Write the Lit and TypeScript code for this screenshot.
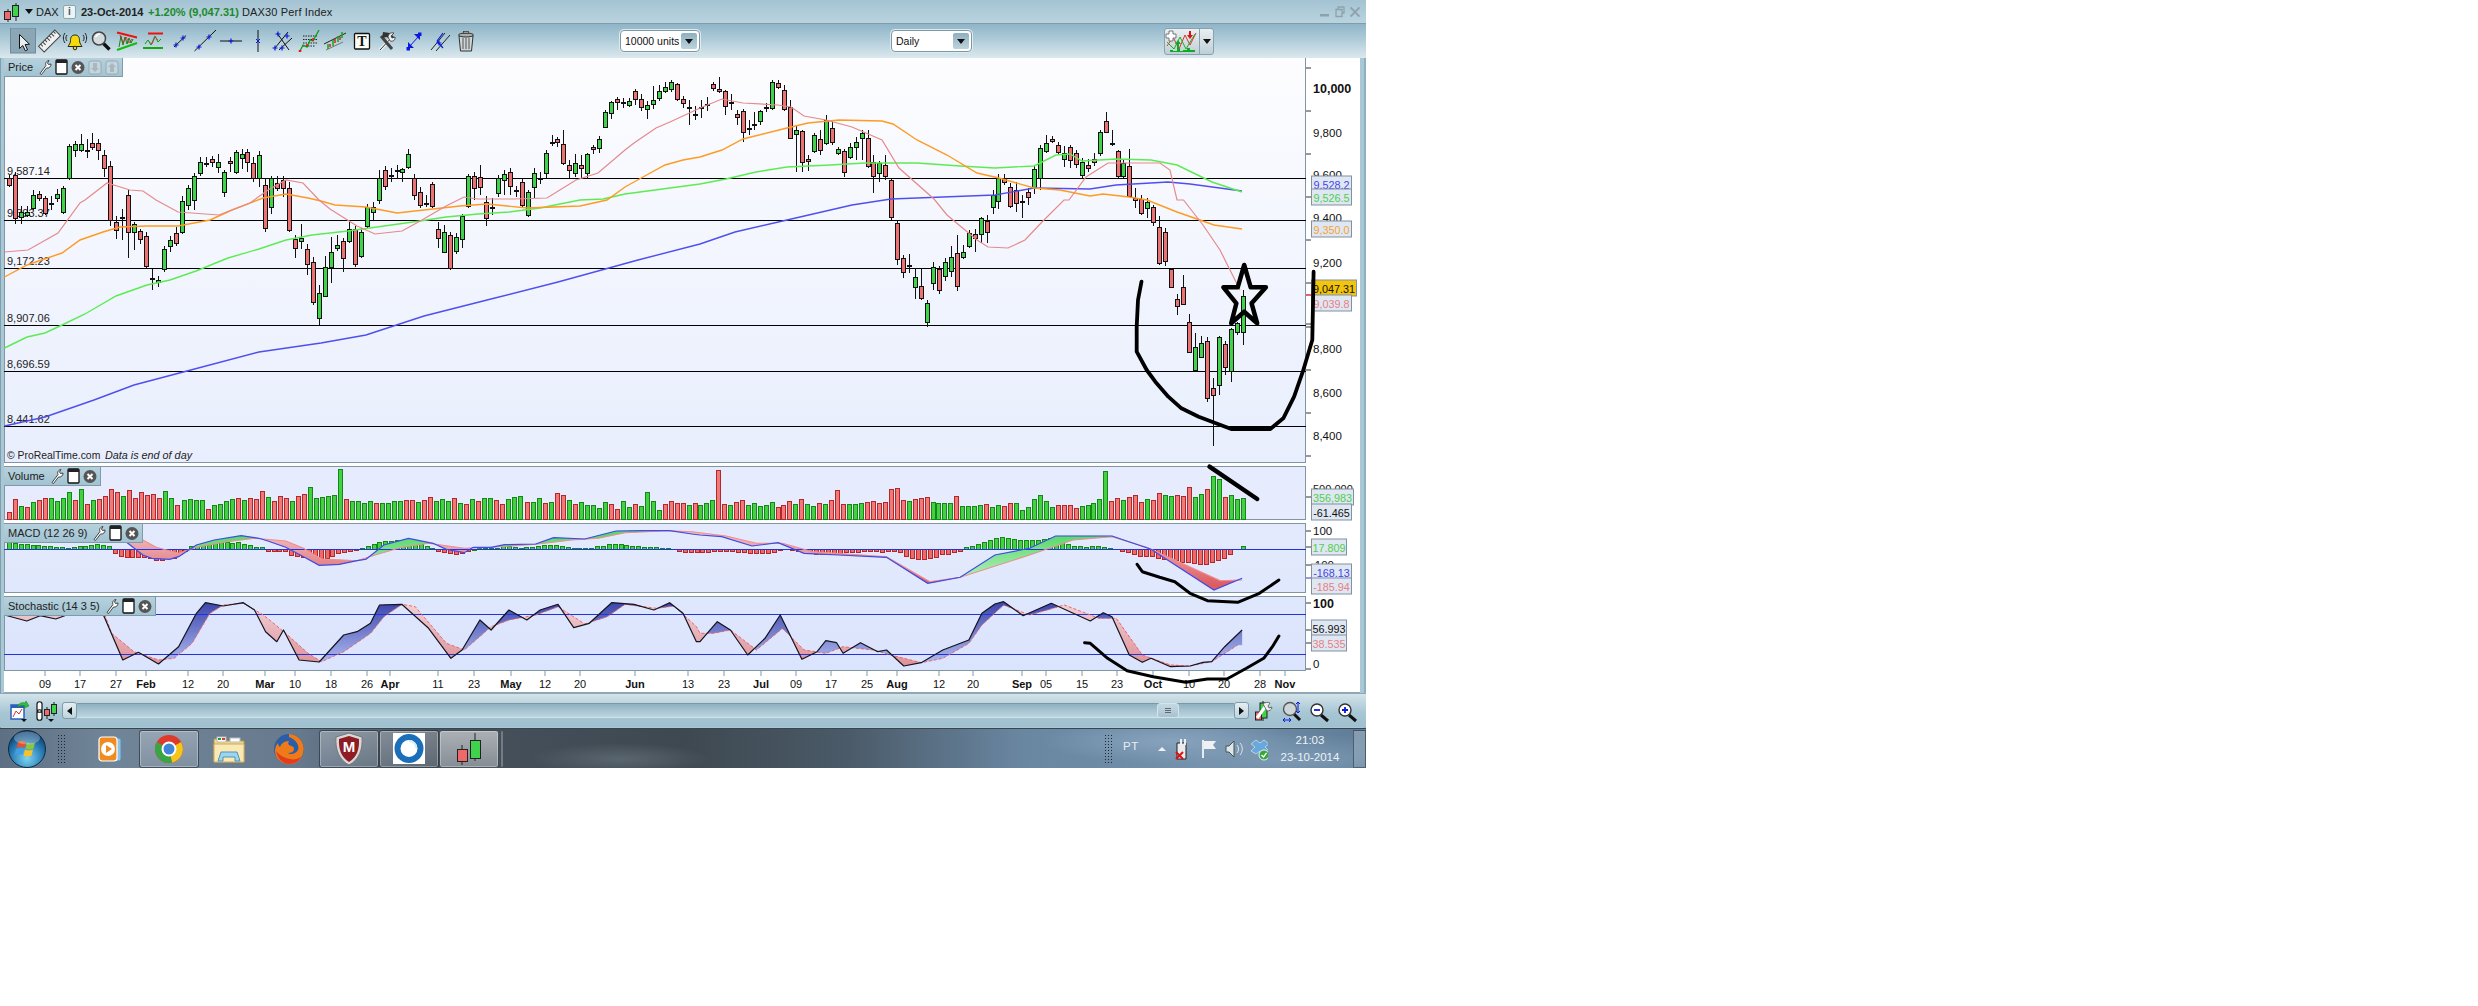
import { LitElement, html, svg, css } from "lit";
import { customElement } from "lit/decorators.js";

type Pt = [number, number];

const parse = (s: string): Pt[] => s.trim().split(/\s+/).map((p) => p.split(",").map(Number) as Pt);
const zl = (s: string, oy: number): Pt[] => parse(s).map(([x, y]) => [x / 2.24, y / 3 + oy] as Pt);
const zr = (s: string, oy: number): Pt[] => parse(s).map(([x, y]) => [700 + x / 2.306, y / 3 + oy] as Pt);
const line = (p: Pt[]) => p.map(([x, y]) => `${x.toFixed(1)},${y.toFixed(1)}`).join(" ");
const lerp = (p: Pt[], x: number) => {
  if (x <= p[0][0]) return p[0][1];
  for (let i = 1; i < p.length; i++) {
    if (x <= p[i][0]) {
      const t = (x - p[i - 1][0]) / (p[i][0] - p[i - 1][0] || 1);
      return p[i - 1][1] + t * (p[i][1] - p[i - 1][1]);
    }
  }
  return p[p.length - 1][1];
};
const hash = (i: number) => {
  const v = Math.sin(i * 12.9898 + 4.1) * 43758.5453;
  return v - Math.floor(v);
};

/* ---------- candles: c top,bot[:wickTop,wickBot] ---------- */
const LEFT = `r178,185 r175,218 g212,217 g212,215 g195,208 r194,198 r198,213 d203 g194,198 g188,212:186,214 g146,178:144,180
g144,150 g144,150:134,152 d150:139,158 r143,147:133,150 r143,150:139,160 r155,168:150,177 r166,220:161,226 r222,230:216,239 d217:209,240
r195,232:190,258 g224,232:222,250 r231,239:229,244 r236,266:232,268 d278:269,290 g280,282:276,287 g249,269:246,272 g240,246:236,252 r233,243:227,246
g201,232:196,234 g188,205:185,210 g176,200:173,210 g162,173:157,176 d163:157,167 r159,162:156,167 g162,167:154,173 g172,192:170,197 r161,163:157,172
g152,172:150,174 g154,158:149,169 r152,162:149,172 r163,178:157,182 g155,178:151,187 r185,228:178,232 g178,207:176,214 r183,188:176,191 r180,188:176,197
r188,230:182,232 r239,248:235,258 g238,241:224,249 r249,264:244,275 r262,302:257,305 g293,318:285,325 g267,296:256,297 g252,267:237,283 g245,248:235,251
r241,258:238,272 g229,241:222,243 r229,264:226,267 g232,256:228,258 g207,226:204,229 g207,212:202,220 g178,200:170,204 r170,186:166,190 d175:168,182 d170:165,179
g169,172:168,182 g154,167:149,169 r178,195:174,200 r192,205:187,208 d203:195,207 r184,206:182,208 r229,238:222,248 g232,252:225,253 r235,268:232,270 g237,251:233,254
g216,239:214,248 g176,206:174,208 r176,188:172,200 r177,187:165,195 r202,218:196,226 d207:198,215 g178,193:175,197 g174,180:170,195 r172,186:168,195 d190:186,197
r182,205:178,208 g192,215:190,217 g173,187:168,198 d178:172,184 g153,173:150,178 d142:135,146 r139,142:137,147 r144,163:130,165 r165,170:160,178 g163,173:154,177
r165,168:155,178 g154,173:153,179 r147,149:145,154 g139,148:136,153 g112,127:110,128 g102,113:101,119 r99,102:97,110 d102:98,108 g101,105:98,107 r91,99:89,105
r99,107:94,111 g105,109:101,119 g100,104:86,109 g91,98:85,101 g87,91:82,93 g82,89:80,92 r84,99:83,101 r99,103:96,108 d107:100,125 d114:106,120`;

const RIGHT = `d107:100,118 d104:97,111 r84,88:82,91 r89,91:77,93 r91,106:90,115 d102:94,110 r114,117:110,125 r111,132:109,142 d128:120,135 d124:112,130 g111,121:110,125 d107:103,112
g82,108:80,110 r83,87:80,89 r90,109:85,111 r107,138:100,139 g130,134:125,172 r131,162:130,172 r159,161:155,171 g135,151:133,153 r139,150:130,155 g120,143:115,145 r128,142:122,145
g149,153:147,155 r151,172:149,177 g147,157:143,159 g142,147:137,160 g133,138:130,160 r138,166:130,168 r162,176:155,193 g163,173:161,182 r165,176:155,180 r180,217:179,220 r223,259:220,265
r258,272:255,278 d265:254,273 g277,287:268,299 r286,298:268,300 g303,322:300,327 g267,283:262,290 r269,290:266,294 g262,276:258,281 g257,271:246,277 r253,286:235,291 g252,257:245,259
g233,246:230,248 r234,238:229,252 g218,234:217,243 r221,232:215,243 g195,207:190,214 g178,201:174,209 r178,182:174,185 r187,206:183,208 r190,203:182,212 d201:195,218 r192,197:188,205
g169,188:165,194 g148,178:145,190 g143,151:135,153 r139,141:136,143 r145,152:142,154 g153,159:146,167 r147,160:145,168 r153,164:150,168 g162,175:158,178 r165,168:159,172 r159,162:153,166
g132,153:130,156 r121,132:112,133 d143:130,146 r151,176:150,178 g163,176:160,178 r166,196:149,197 r198,200:188,208 r199,213:195,215 g202,208:198,218 r207,222:205,226 r227,263:216,265
r232,261:228,266 r269,287:268,288 r299,306:294,315 r287,304:275,305 r322,352:314,353 g347,370:333,371 g343,357:336,358 r341,398:337,402 r388,395:378,446 g337,385:336,395 r344,367:341,375
g329,371:328,382 g323,332:322,335 g296,332:290,345`;

interface C { x: number; t: number; b: number; c: string; wt: number; wb: number; }
const buildCandles = (src: string, x0: number, x1: number, seed: number): C[] => {
  const items = src.trim().split(/\s+/);
  const s = (x1 - x0) / (items.length - 1);
  return items.map((it, i) => {
    const c = it[0];
    const [body, wick] = it.slice(1).split(":");
    const nums = body.split(",").map(Number);
    const t = nums[0];
    const b = nums.length > 1 ? nums[1] : nums[0];
    const w = wick ? wick.split(",").map(Number) : [t - 1 - hash(i + seed) * 6, b + 1 + hash(i + seed + 50) * 6];
    return { x: Math.round(x0 + i * s), t, b, c, wt: w[0], wb: w[1] };
  });
};
const CANDLES = [...buildCandles(LEFT, 9, 694.6, 0), ...buildCandles(RIGHT, 700.9, 1242.5, 300)];

/* ---------- moving averages ---------- */
const MA_RED = parse(`4.5,252 28,250 58,233 80,203 85,200 107,183 130,190 143,191 156,200 178,212 219,215 250,203 268,190 286,180 303,183 319,200 330,209 357,226 375,234 402,231 422,220 446,206 464,197 478,199 513,199 547,198 576,180 598,173 625,150 634,143 656,128 670,122 700,108 722,99 743,103 778,105 791,107 804,116 826,120 852,127 882,140 899,168 934,199 947,215 977,240 988,247 1008,248 1025,240 1042,222 1064,200 1069,200 1086,177 1108,163 1147,163 1160,163 1170,170 1177,200 1183.5,200 1203,225 1220,250 1240,290`);
const MA_ORANGE = parse(`4.5,277 27,265 62,253 80,240 103,232 120,227 147,226 178,226 210,220 232,210 263,198 286,194 308,198 321,201 335,205 366,207 397,213 424,210 460,206 487,204 527,208 580,206 607,200 625,187 643,177 665,165 683,160 700,157 722,150 743,139 787,128 808,123 839,120 882,121 893,124 917,140 947,155 977,173 999,178 1034,188 1060,190 1090,196 1103,194 1129,197 1147,200 1177,212 1197,219 1214,225 1242,229`);
const MA_GREEN = parse(`4.5,348 27,337 45,333 62,325 85,314 116,296 147,285 170,280 196,271 228,258 259,249 286,240 312,235 348,231 384,226 420,221 446,217 478,214 509,212 540,208 580,200 603,199 625,194 670,188 700,184 726,179 756,172 787,167 830,165 865,163 917,163 960,166 995,168 1034,166 1056,155 1070,154 1082,161 1116,159 1151,160 1177,165 1212,182 1242,192`);
const MA_BLUE = parse(`4.5,426 45,417 94,400 134,385 187,371 259,352 321,343 366,335 424,316 491,299 558,282 638,260 700,244 735,232 787,220 852,205 891,199 995,195 1034,188 1090,189 1116,185 1168,182 1190,184 1242,191`);

/* ---------- volume ---------- */
const VOL_L = `r155 r118 g138 r142 g127 r120 r115 g115 g123 g115 g97 r120 g88 r133 g120 r118 r108 r88 r97 g108 r90 r115 r97 r105 r103 r113 g93 g113 r135 g120 g118 g120 g120 r148 g135 g132 g122 g117 r115 g120 r115 r117 r93 g112 r123 r108 r115 g122 r108 r102 g80 g113 g110 g107 g105 g28 r117 g124 g124 g130 g124 r130 g130 g130 g124 g124 r120 r120 g127 r120 r112 g122 g117 g124 r114 g130 r132 g118 r123 g115 g115 r120 r132 g118 g112 g108 r126 g125 g115 r130 g125 r100 r105 g120 r132 g127 g135 g135 g145 g127 r132 r148 g123 g140 r133 g138 g97 g122 g150 r132 r124 r128 r130 g135 r128`;
const VOL_R = `g135 g130 g120 r30 r132 g135 r127 r120 g135 g130 g137 g135 g127 r142 r135 r124 g132 r118 g133 g138 r130 g132 r120 r90 r132 g133 g133 g130 r127 r124 r130 r127 r88 r85 r120 g124 r118 r114 r111 g127 g130 g130 g130 r108 g138 g138 g138 g136 r133 g142 g136 r138 r130 g130 g150 g142 g118 g105 g124 g142 r136 r136 r136 r144 g138 g135 g130 g118 g33 r122 r115 g120 r112 r105 r127 g118 r120 r98 g105 g107 r105 r107 r82 g112 g102 r87 g48 g58 r110 g105 g118 g115`;
const barsFrom = (src: string, x0: number, x1: number) => {
  const it = src.trim().split(/\s+/);
  const s = (x1 - x0) / (it.length - 1);
  return it.map((v, i) => ({ x: Math.round(x0 + i * s), c: v[0], top: 460 + Number(v.slice(1)) / 3 }));
};
const VOLS = [...barsFrom(VOL_L, 9, 695), ...barsFrom(VOL_R, 700, 1242.5)];

/* ---------- MACD ---------- */
const HIST_L = [22,18,15,14,13,12,10,8,6,5,4,5,8,10,12,14,12,10,-12,-20,-25,-25,-25,-25,-27,-32,-32,-28,-28,-15,-5,8,12,17,20,22,22,20,17,20,15,12,6,6,-6,-6,-6,-6,-18,-22,-25,-28,-32,-35,-28,-22,-12,-8,-6,-3,3,10,15,22,25,25,27,27,27,22,15,10,3,-5,-8,-12,-15,-12,-5,1,3,2,2,3,10,8,6,4,5,6,8,12,12,12,8,6,4,4,3,4,8,10,14,14,14,12,10,8,6,6,6,4,3,0,-6,-9,-9,-9];
const HIST_R = [-8,-8,-5,-5,-6,-6,-8,-10,-12,-13,-13,-12,-8,-4,0,-4,-5,-8,-12,-14,-16,-16,-14,-12,-10,-8,-8,-6,-5,-5,-8,-6,-6,-10,-20,-28,-30,-30,-28,-24,-16,-14,-10,-6,5,10,15,20,26,32,36,34,30,28,26,26,28,30,34,30,20,14,10,8,6,8,10,6,4,0,-6,-10,-16,-20,-20,-22,-28,-30,-34,-34,-38,-40,-42,-44,-44,-40,-34,-26,-14,0,10];
const spread = (a: number[], x0: number, x1: number) => a.map((v, i) => ({ x: Math.round(x0 + (i * (x1 - x0)) / (a.length - 1)), v: v / 3 }));
const HIST = [...spread(HIST_L, 9, 697), ...spread(HIST_R, 702, 1242.5)];

const MB = [...zl(`280,243 320,285 340,295 380,298 400,290 440,255 480,240 540,227 580,235 600,243 640,262 680,290 715,316 760,313 800,302 820,298 860,255 915,235 970,250 1000,268 1040,278 1060,262 1100,262 1130,254 1200,252 1240,233 1310,237 1380,213 1440,212 1500,212 1550,222`, 460), ...zr(`0,225 50,230 120,258 180,248 240,280 320,285 430,292 525,370 600,352 680,285 760,265 820,228 950,228 1040,268 1185,390 1250,355`, 460)];
const MR = [...zl(`280,238 320,240 350,262 400,280 440,262 500,247 570,235 640,243 680,265 720,297 800,302 840,285 900,262 960,250 1040,265 1100,262 1200,253 1280,240 1340,235 1400,218 1500,212 1550,215`, 460), ...zr(`0,218 60,228 130,250 190,250 260,275 430,290 530,365 600,352 760,285 860,240 950,230 1030,262 1200,362 1250,360`, 460)];

/* ---------- Stochastic ---------- */
const SK = [...zl(`10,45 60,63 90,47 125,57 160,40 230,40 275,180 310,157 355,192 400,140 440,40 460,8 500,18 545,8 570,30 595,95 620,125 635,90 670,180 715,186 770,105 800,95 830,70 850,15 900,13 960,85 1010,175 1035,150 1075,60 1100,90 1140,30 1180,60 1210,30 1250,13 1285,83 1320,70 1370,8 1420,13 1465,30 1500,8 1530,40 1560,125`, 600), ...zr(`0,125 40,65 70,90 110,165 150,115 185,45 235,178 270,155 290,122 315,128 330,160 370,128 410,155 430,150 470,198 510,188 560,150 620,120 650,40 680,12 700,5 745,47 810,10 900,63 930,38 950,50 990,165 1020,187 1040,175 1085,200 1130,198 1160,187 1180,185 1210,140 1250,90`, 600)];
const SD = [...zl(`10,45 160,40 235,45 250,100 300,155 355,180 390,175 430,130 470,40 500,15 545,10 590,45 640,100 690,160 720,185 770,155 830,100 860,50 900,13 930,20 1000,130 1040,150 1100,80 1140,60 1200,45 1250,20 1310,72 1360,50 1400,13 1470,25 1510,18 1560,80`, 600), ...zr(`0,100 30,100 70,90 130,150 190,85 240,150 290,160 330,140 400,150 440,165 510,188 560,175 620,130 650,75 700,15 760,45 840,15 920,55 960,55 1020,165 1085,195 1130,198 1180,185 1240,135`, 600)];

const fills = (a: Pt[], b: Pt[], x0: number, x1: number) => {
  let up = "", dn = "";
  for (let x = x0; x < x1; x += 1.5) {
    const n = Math.min(x + 1.5, x1);
    const a0 = lerp(a, x), a1 = lerp(a, n), b0 = lerp(b, x), b1 = lerp(b, n);
    const q = `M${x} ${a0.toFixed(1)}L${n} ${a1.toFixed(1)}L${n} ${b1.toFixed(1)}L${x} ${b0.toFixed(1)}Z`;
    if (a0 + a1 < b0 + b1) up += q; else dn += q;
  }
  return { up, dn };
};
const MF = fills(MB, MR, 125, 1242);
const SF = fills(SK, SD, 5, 1242);

/* ---------- axes ---------- */
const LEVELS: [string, number][] = [["9,587.14", 178], ["9,393.37", 220], ["9,172.23", 268], ["8,907.06", 325], ["8,696.59", 371], ["8,441.62", 426]];
const PRICE_LABELS: [string, number, boolean][] = [["10,000", 88, true], ["9,800", 132, false], ["9,600", 174, false], ["9,400", 217, false], ["9,200", 262, false], ["8,800", 348, false], ["8,600", 392, false], ["8,400", 435, false]];
const DATES: [string, number, boolean][] = [["09",45,false],["17",80,false],["27",116,false],["Feb",146,true],["12",188,false],["20",223,false],["Mar",265,true],["10",295,false],["18",331,false],["26",367,false],["Apr",390,true],["11",438,false],["23",474,false],["May",511,true],["12",545,false],["20",580,false],["Jun",635,true],["13",688,false],["23",724,false],["Jul",761,true],["09",796,false],["17",831,false],["25",867,false],["Aug",897,true],["12",939,false],["20",973,false],["Sep",1022,true],["05",1046,false],["15",1082,false],["23",1117,false],["Oct",1153,true],["10",1189,false],["20",1224,false],["28",1260,false],["Nov",1285,true]];

const box = (label: string, y: number, color: string, w = 40, bg = "#dfe7f3") => svg`
  <rect x="1311.5" y=${y - 8} width=${w} height="16" fill=${bg} stroke="#80929f"/>
  <text x=${1311.5 + w / 2} y=${y + 4.5} text-anchor="middle" font-size="10.8" fill=${color}>${label}</text>`;
const tick = (y: number) => svg`<line x1="1306" x2="1311" y1=${y} y2=${y} stroke="#333"/>`;

/* ---------- toolbar icons (page coordinates) ---------- */
const cross = (x: number, y: number, c = "#0a18e0") => svg`<path d="M${x - 2.5} ${y}h5M${x} ${y - 2.5}v5" stroke=${c} stroke-width="1.2" fill="none"/>`;
const TOOLS: [number, number, unknown][] = [
  [10, 27, svg`<rect x="10.5" y="28" width="25" height="25" fill="#8ba6b5" stroke="#6f8b9b"/><path d="M19.5 34.5v14l3.3-3 2.5 5.3 2.2-1-2.4-5.2 4.4-.4z" fill="#e9eef0" stroke="#111"/>`],
  [37, 25, svg`<g transform="rotate(-45 49.5 41)"><rect x="38" y="37" width="23" height="8" fill="#f0f2f2" stroke="#444"/><path d="M41 37v3M44 37v4M47 37v3M50 37v4M53 37v3M56 37v4M59 37v3" stroke="#444"/></g>`],
  [62, 26, svg`<path d="M75 35c-3.500 0-4.500 2.500-4.500 5.500 0 3-1.800 4.500-2.500 6h14c-.7-1.500-2.500-3-2.500-6 0-3-1-5.500-4.500-5.500z" fill="#f5d90a" stroke="#222"/><circle cx="75" cy="48" r="1.800" fill="#f5d90a" stroke="#222"/><path d="M67 35c-1.500 2-1.500 4 0 6M83 35c1.500 2 1.500 4 0 6M65 33c-2.200 3-2.200 7 0 10M85 33c2.200 3 2.200 7 0 10" stroke="#222" fill="none"/>`],
  [88, 25, svg`<path d="M103.500 43.500l6 6" stroke="#111" stroke-width="3.400"/><circle cx="99" cy="38.500" r="6.500" fill="#d5dcdf" stroke="#444" stroke-width="1.500"/><path d="M95.500 37c1-2 2.500-3 4.500-3" stroke="#fff" fill="none" stroke-width="1.500"/>`],
  [113, 27, svg`<path d="M117 32.500L137 37.500" stroke="#ee1111" stroke-width="2"/><path d="M117 50L137 43" stroke="#11bb11" stroke-width="2"/><path d="M119 47l2-11 2 9 2-8 2 7 2-6 2 5 2-4" stroke="#118811" fill="none"/><path d="M120 35l3 8 3-6 3 6 3-4" stroke="#cc2222" fill="none" stroke-width=".8"/>`],
  [140, 28, svg`<path d="M148 33.500h15" stroke="#ee1111" stroke-width="2"/><path d="M143 48h20" stroke="#11aa11" stroke-width="2"/><path d="M145 44l3-4 3 5 4-9 3 6 3-3" stroke="#119911" fill="none"/><path d="M149 42l3 2 3-7 3 3" stroke="#cc3333" fill="none" stroke-width=".8"/>`],
  [168, 22, svg`<path d="M174 47L186 35.500" stroke="#111"/>${cross(176, 45)}${cross(183, 38)}`],
  [190, 28, svg`<path d="M194.500 51L216 30" stroke="#111"/>${cross(199, 47)}${cross(209, 37)}`],
  [218, 28, svg`<path d="M220 41h22" stroke="#111"/>${cross(231, 41)}`],
  [246, 24, svg`<path d="M258 30v22" stroke="#111"/><path d="M256 39l4 4M260 39l-4 4" stroke="#0a18e0"/>`],
  [270, 25, svg`<path d="M275 48L288 32M279 50L292 38M277 33L289 50" stroke="#111"/>${cross(278, 34)}${cross(275, 48)}${cross(282, 48)}${cross(287, 36)}`],
  [295, 27, svg`<path d="M303 36h14M303 39.500h14M303 43h14M303 46h12" stroke="#222" stroke-dasharray="1.500 1"/><path d="M300 51l3-6 4 2 3-7 3 1 6-11" stroke="#119911" fill="none" stroke-width="1.300"/><path d="M300 50v2" stroke="#ee1111" stroke-width="2.500"/><path d="M307 44v2M313 38v3" stroke="#ee1111" stroke-width="1.500"/>`],
  [322, 28, svg`<path d="M324 44L346 33" stroke="#222"/><path d="M326 50L343 42" stroke="#777" /><path d="M328 44v5M333 40v6M338 36v6M342 32v6" stroke="#11aa11" stroke-width="1.500"/><path d="M330 44v3M335 39v4M340 37v3" stroke="#dd2222" stroke-width="1.500"/>`],
  [350, 24, svg`<rect x="354.500" y="33.500" width="15" height="15.500" rx="1" fill="#fdfdf8" stroke="#111" stroke-width="1.300"/><text x="362" y="46" text-anchor="middle" font-size="14" font-weight="700" style="font-family:'Liberation Serif',serif" fill="#111">T</text>`],
  [374, 27, svg`<path d="M380 50l12-13" stroke="#f0f3f3" stroke-width="3"/><path d="M380 50l12-13" stroke="#333" stroke-width="1" fill="none"/><path d="M381 36l11 13" stroke="#444" stroke-width="3"/><path d="M383 32l7 1 5 5-3 3-5-4-5 1z" fill="#333"/><path d="M388 37c0-3 3-5 6-4l-3 3 1 2 3-1c.5 3-2 5-5 4z" fill="#eee" stroke="#333" stroke-width=".8"/>`],
  [401, 24, svg`<path d="M410 46l8-9" stroke="#0a18e0"/><path d="M408 42v6h6zM420 40v-6h-6z" fill="#0a18e0"/><rect x="406.500" y="47" width="3.500" height="3.500" fill="#0a18e0"/><rect x="418" y="32.500" width="3.500" height="3.500" fill="#0a18e0"/>`],
  [425, 28, svg`<path d="M431 50L445 33M436 51L450 35" stroke="#222"/><path d="M437 41l6 7M443 33l-6 8" stroke="#0a18e0" stroke-width="1.200"/>${cross(439, 43)}`],
  [453, 25, svg`<path d="M459 36h14l-1.500 15h-11z" fill="#cfd4d4" stroke="#333"/><ellipse cx="466" cy="35" rx="7.500" ry="2" fill="#a9aeae" stroke="#333"/><path d="M463 38v11M466 38v11M469 38v11" stroke="#555"/><rect x="463.500" y="31.500" width="5" height="2" fill="#999" stroke="#333" stroke-width=".7"/>`],
];

const wrench = svg`<svg width="14" height="16" viewBox="0 0 14 16" aria-hidden="true"><path d="M2 14.500L8 6.500c-1-2 0-4.500 3-5l-1.500 2.500 1 1.500 2.500-.5c.3 2.500-2 4.500-4.500 4L3.500 15.500z" fill="#fff" stroke="#333" stroke-width=".9"/></svg>`;
const win = svg`<svg width="13" height="16" viewBox="0 0 13 16" aria-hidden="true"><rect x="1" y="1" width="11" height="14" rx="1" fill="#fff" stroke="#111" stroke-width="1.300"/><rect x="1" y="1" width="11" height="3" fill="#222"/></svg>`;
const closeIc = svg`<svg width="14" height="15" viewBox="0 0 14 15" aria-hidden="true"><circle cx="7" cy="7.500" r="6.500" fill="#555"/><path d="M4.500 5l5 5M9.500 5l-5 5" stroke="#fff" stroke-width="2"/></svg>`;
const fadeIc = (up: boolean) => svg`<svg width="14" height="15" viewBox="0 0 14 15" aria-hidden="true"><rect x="1" y="1" width="12" height="13" rx="2" fill="#c3d6de" stroke="#98aab3"/><path d=${up ? "M7 3l4 4H9v5H5V7H3z" : "M7 12l4-4H9V3H5v5H3z"} fill="#a9b8be"/></svg>`;

const ddArrow = svg`<svg width="8" height="5" viewBox="0 0 8 5" aria-hidden="true"><path d="M0 0h8L4 5z" fill="#111"/></svg>`;

@customElement("app-root")
export class AppRoot extends LitElement {
  static styles = css`
    :host { display: block; width: 2478px; height: 1006px; background: #fff; font-family: "Liberation Sans", Arial, sans-serif; overflow: hidden; }
    svg { display: block; flex: none; }
    svg text { font-family: "Liberation Sans", Arial, sans-serif; }
    .screen { width: 1366px; height: 768px; display: flex; flex-direction: column; }
    .window { height: 728px; flex: none; background: #a9c8d6; display: flex; flex-direction: column; box-shadow: inset 0 1px 0 #6f8e9e, inset 1px 0 0 #7f9eae, inset -2px 0 0 #8fb0bf; }
    .title { height: 24px; box-sizing: border-box; flex: none; display: flex; align-items: center; padding-left: 4px; font-size: 11px; color: #222; background: linear-gradient(#a4c3d2, #b9d4df); border-bottom: 1px solid #7f9cab; white-space: nowrap; }
    .title b { font-weight: 700; }
    .caret { margin: 0 3px 0 5px; }
    .dax { width: 27px; }
    .info { width: 11px; height: 12px; border: 1px solid #8aa; border-radius: 2px; background: #eef3f4; font-size: 10px; font-weight: 700; line-height: 12px; text-align: center; color: #456; margin-right: 5px; }
    .date { width: 67px; }
    .chg { color: #1c8a2a; width: 94px; }
    .name { flex: 1; letter-spacing: .15px; }
    .winbtns { display: flex; gap: 5px; margin-right: 6px; }
    .toolbar { height: 34px; flex: none; display: flex; align-items: center; padding-left: 10px; background: linear-gradient(#8fb5c8, #aecbd8 45%, #dbe8ee); }
    .tools { display: flex; height: 26px; }
    .sel { flex: none; height: 22px; box-sizing: border-box; background: #fff; border: 1px solid #7d98a6; border-radius: 4px; display: flex; align-items: center; font-size: 10.5px; color: #111; padding-left: 4px; box-shadow: 0 0 0 1px #dfe9ee; white-space: nowrap; }
    .sel span { flex: 1; }
    .sel i { width: 16px; height: 16px; margin-right: 2px; display: flex; align-items: center; justify-content: center; background: linear-gradient(#8fb0c0, #bcd3dd); border-radius: 2px; }
    .s1 { width: 80px; margin-left: 142px; }
    .s2 { width: 81px; margin-left: 191px; }
    .ind { flex: none; margin-left: 192px; display: flex; height: 27px; box-sizing: border-box; border: 1px solid #8ba2ae; border-radius: 3px; background: linear-gradient(#e9eff2, #bfcfd7); }
    .ind div { width: 13px; border-left: 1px solid #8ba2ae; display: flex; align-items: center; justify-content: center; }
    .charts { position: relative; flex: none; height: 635px; margin-left: 4px; width: 1356px; background: #fff; }
    .row { display: flex; }
    .gap3 { margin-top: 3px; }
    .plot { position: relative; flex: none; width: 1302px; box-sizing: border-box; border-left: 1px solid #8096a4; border-right: 1px solid #8096a4; border-bottom: 1px solid #8096a4; }
    .p1 { height: 405px; background: linear-gradient(#fdfdff, #e8eefd); }
    .p2 { height: 54px; background: #e6ecfd; border-top: 1px solid #8096a4; }
    .p3 { height: 70px; background: linear-gradient(#e4eafd, #e0e8fd); border-top: 1px solid #8096a4; }
    .p4 { height: 75px; background: linear-gradient(#dfe7fd, #dbe4fd); border-top: 1px solid #8096a4; }
    .plot > svg { position: absolute; left: -1px; top: 0; }
    .p2 > svg, .p3 > svg, .p4 > svg { top: -1px; }
    .tab { position: absolute; left: -1px; top: 0; height: 18px; display: flex; align-items: center; gap: 3px; padding: 0 3px; background: linear-gradient(#b6d1dd, #a2c3d2); border-right: 1px solid #7f9aa8; border-bottom: 1px solid #7f9aa8; font-size: 11px; color: #222; white-space: nowrap; z-index: 2; }
    .tab span { margin: 0 2px 0 1px; }
    .axis { position: relative; width: 54px; flex: none; }
    .axis > svg { position: absolute; left: 0; top: 0; }
    .dates { height: 22px; }
    .ink { position: absolute; left: -4px; top: 0; z-index: 3; pointer-events: none; }
    .scroll { height: 34px; flex: none; background: linear-gradient(#d3e3e9, #a8c7d5 55%, #9fbfce); border-top: 1px solid #8ea8b4; box-sizing: border-box; display: flex; align-items: center; }
    .sbtn { width: 13px; height: 15px; border: 1px solid #7f9aa8; border-radius: 3px; background: linear-gradient(#e5eef2, #bed4dd); display: flex; align-items: center; justify-content: center; flex: none; }
    .track { flex: none; width: 1157px; height: 15px; box-sizing: border-box; background: linear-gradient(#8fb1c1, #bcd6e0); border-top: 1px solid #7e99a6; border-bottom: 1px solid #d4e2e8; display: flex; align-items: center; }
    .thumb { width: 22px; height: 15px; margin-left: 1080px; background: linear-gradient(#c4d9e2, #a6c3d0); border: 1px solid #d6e4ea; border-radius: 3px; box-sizing: border-box; display: flex; flex-direction: column; gap: 1px; align-items: center; justify-content: center; }
    .thumb u { display: block; width: 6px; height: 1px; background: #667; text-decoration: none; }
    .taskbar { height: 40px; flex: none; display: flex; align-items: center; position: relative; border-top: 1px solid #39454f; box-sizing: border-box; background: radial-gradient(ellipse 130px 22px at 1170px 12px, #86a2bc, transparent), radial-gradient(ellipse 160px 26px at 1290px 30px, #7d99b3, transparent), radial-gradient(ellipse 90px 16px at 620px 30px, #5a666f, transparent), linear-gradient(90deg, #5d6f83 0, #718599 8%, #66798d 22%, #46525e 32%, #3e4850 50%, #4a5a68 62%, #6a87a2 75%, #728fab 88%, #5f7d97 100%); }
    .orb { margin-left: 7px; width: 40px; flex: none; }
    .grip { width: 8px; height: 30px; flex: none; background-image: radial-gradient(circle, #1e2a33 .9px, transparent 1px); background-size: 3px 3px; }
    .g1 { margin-left: 10px; }
    .tb { height: 38px; width: 60px; flex: none; display: flex; align-items: center; justify-content: center; border-radius: 3px; box-sizing: border-box; }
    .tb.on { background: linear-gradient(rgba(255,255,255,.28), rgba(255,255,255,.12)); border: 1px solid rgba(25,35,45,.65); box-shadow: inset 0 0 0 1px rgba(255,255,255,.3); }
    .tb.act { background: linear-gradient(rgba(255,255,255,.55), rgba(255,255,255,.35)); }
    .strip { width: 4px; height: 38px; margin-left: 1px; flex: none; background: rgba(255,255,255,.25); border: 1px solid rgba(25,35,45,.5); border-radius: 2px; box-sizing: border-box; }
    .wmp { width: 57px; margin-left: 17px; }
    .spacer { flex: 1; }
    .lang { color: #e8eef3; font-size: 11.5px; margin: -6px 14px 0 11px; width: 21px; letter-spacing: .5px; }
    .tray { display: flex; align-items: center; gap: 9px; width: 113px; }
    .clock { width: 82px; text-align: center; color: #eef3f7; font-size: 11.5px; line-height: 17px; margin-left: -2px; }
    .desk { width: 13px; height: 38px; border: 1px solid rgba(20,30,40,.5); box-sizing: border-box; margin-left: 2px; background: linear-gradient(rgba(255,255,255,.25), rgba(255,255,255,.1)); }
  `;

  priceSvg() {
    return svg`
      ${LEVELS.map(([l, y]) => svg`
        <line x1="4" x2="1306" y1=${y + 0.5} y2=${y + 0.5} stroke="#000" stroke-width="1"/>
        <text x="7" y=${y - 3.5} font-size="11" fill="#222">${l}</text>`)}
      <g shape-rendering="crispEdges">
        ${CANDLES.map((c) => svg`
          <line x1=${c.x + 0.5} x2=${c.x + 0.5} y1=${c.wt} y2=${c.wb} stroke="#111"/>
          ${c.c === "d"
            ? svg`<rect x=${c.x - 2} y=${c.t} width="5" height="2" fill="#111"/>`
            : svg`<rect x=${c.x - 1.5} y=${c.t + 0.5} width="4" height=${Math.max(1, c.b - c.t)} fill=${c.c === "g" ? "#3fd24a" : "#ea7272"} stroke="#111"/>`}`)}
      </g>
      <polyline points=${line(MA_BLUE)} fill="none" stroke="#4f4fee" stroke-width="1.4"/>
      <polyline points=${line(MA_GREEN)} fill="none" stroke="#5cec52" stroke-width="1.4"/>
      <polyline points=${line(MA_ORANGE)} fill="none" stroke="#ff9a22" stroke-width="1.4"/>
      <polyline points=${line(MA_RED)} fill="none" stroke="#e58a8a" stroke-width="1.2"/>
      <text x="7" y="459" font-size="10.4" fill="#222">© ProRealTime.com</text>
      <text x="105" y="459" font-size="10.8" font-style="italic" fill="#222">Data is end of day</text>`;
  }

  priceAxis() {
    const ticks = [68, 111, 154, 197, 240, 283, 327, 370, 413, 456];
    return svg`
      ${ticks.map(tick)}
      ${PRICE_LABELS.map(([l, y, b]) => svg`<text x="1313" y=${y + 4.5} font-size=${b ? 12.5 : 11.5} font-weight=${b ? 700 : 400} fill="#111">${l}</text>`)}
      ${box("9,528.2", 184, "#4444ee")}
      ${box("9,526.5", 197, "#4fce4f")}
      ${box("9,350.0", 229, "#f3a233")}
      <line x1="1306" x2="1312" y1="324" y2="324" stroke="#333"/>
      <line x1="1306" x2="1312" y1="295" y2="295" stroke="#d33" stroke-width="1.5"/>
      ${box("9,047.31", 288, "#111", 45, "#f3c40d")}
      ${box("9,039.8", 303, "#e77f85")}`;
  }

  volSvg() {
    return svg`<g shape-rendering="crispEdges">${VOLS.map((b) => svg`
      <rect x=${b.x - 1.5} y=${Math.round(b.top) + 0.5} width="4" height=${519 - Math.round(b.top)} fill=${b.c === "g" ? "#45cf45" : "#ee7a7a"} stroke=${b.c === "g" ? "#128a12" : "#b62626"}/>`)}</g>`;
  }

  macdSvg() {
    return svg`
      <defs>
        <linearGradient id="mr" gradientUnits="userSpaceOnUse" x1="0" x2="0" y1="535" y2="585"><stop offset="0" stop-color="#efbcc0"/><stop offset="1" stop-color="#dd5c62"/></linearGradient>
        <linearGradient id="mg" gradientUnits="userSpaceOnUse" x1="0" x2="0" y1="535" y2="580"><stop offset="0" stop-color="#5ad86c"/><stop offset="1" stop-color="#b5f0bd"/></linearGradient>
      </defs>
      <g shape-rendering="crispEdges">${HIST.filter((h) => h.v !== 0).map((h) => svg`
        <rect x=${h.x - 1.5} y=${(h.v > 0 ? 549 - Math.round(h.v) : 549) + 0.5} width="4" height=${Math.max(1, Math.round(Math.abs(h.v)))} fill=${h.v > 0 ? "#45cf45" : "#ee6a6a"} stroke=${h.v > 0 ? "#128a12" : "#b62626"}/>`)}</g>
      <path d=${MF.dn} fill="url(#mr)" stroke="url(#mr)" stroke-width=".3"/>
      <path d=${MF.up} fill="url(#mg)" stroke="url(#mg)" stroke-width=".3"/>
      <line x1="4" x2="1306" y1="549.5" y2="549.5" stroke="#2233dd" stroke-width="1.2"/>
      <polyline points=${line(MR)} fill="none" stroke="#ee8f8f" stroke-width="1.1"/>
      <polyline points=${line(MB)} fill="none" stroke="#3d4be8" stroke-width="1.2"/>`;
  }

  stochSvg() {
    return svg`
      <defs>
        <linearGradient id="sb" gradientUnits="userSpaceOnUse" x1="0" x2="0" y1="604" y2="668"><stop offset="0" stop-color="#3e49ad"/><stop offset="1" stop-color="#b8c4f7"/></linearGradient>
        <linearGradient id="sp" gradientUnits="userSpaceOnUse" x1="0" x2="0" y1="604" y2="668"><stop offset="0" stop-color="#f0d0d6"/><stop offset="1" stop-color="#dd8f97"/></linearGradient>
      </defs>
      <path d=${SF.up} fill="url(#sb)" stroke="url(#sb)" stroke-width=".3"/>
      <path d=${SF.dn} fill="url(#sp)" stroke="url(#sp)" stroke-width=".3"/>
      <line x1="4" x2="1306" y1="614.5" y2="614.5" stroke="#2233dd" stroke-width="1.2"/>
      <line x1="4" x2="1306" y1="654.5" y2="654.5" stroke="#2233dd" stroke-width="1.2"/>
      <polyline points=${line(SD)} fill="none" stroke="#e66" stroke-width="1" stroke-dasharray="3 2"/>
      <polyline points=${line(SK)} fill="none" stroke="#151520" stroke-width="1.2" stroke-linejoin="round"/>`;
  }

  plot(cls: string, y: number, h: number, content: unknown, tab?: unknown) {
    return html`<div class="plot ${cls}">
      ${tab ?? ""}
      <svg width="1302" height=${h} viewBox="4 ${y} 1302 ${h}">${content}</svg>
    </div>`;
  }
  axis(y: number, h: number, content: unknown) {
    return html`<div class="axis"><svg width="54" height=${h} viewBox="1306 ${y} 54 ${h}">${content}</svg></div>`;
  }

  render() {
    return html`<div class="screen">
      <div class="window">
        <div class="title">
          <svg width="16" height="22" viewBox="0 0 16 22" aria-hidden="true"><path d="M4 8v13M12 2v18" stroke="#222"/><rect x=".5" y="10.5" width="6" height="8" fill="#ee6a6a" stroke="#222"/><rect x="8.5" y="4.5" width="6" height="11" fill="#3fd24a" stroke="#222"/></svg>
          <span class="caret">${ddArrow}</span>
          <span class="dax">DAX</span>
          <span class="info">i</span>
          <b class="date">23-Oct-2014</b>
          <b class="chg">+1.20% (9,047.31)</b>
          <span class="name">DAX30 Perf Index</span>
          <div class="winbtns">
            <svg width="10" height="12" viewBox="0 0 10 12" aria-hidden="true"><rect y="8" width="9" height="2.5" fill="#8fa2ac"/></svg>
            <svg width="10" height="12" viewBox="0 0 10 12" aria-hidden="true"><path d="M3 3V1h6v6H7M1 3.5h6v7H1z" fill="none" stroke="#8fa2ac" stroke-width="1.3"/></svg>
            <svg width="10" height="12" viewBox="0 0 10 12" aria-hidden="true"><path d="M.5 1.5l9 9M9.500 1.5l-9 9" stroke="#8fa2ac" stroke-width="1.8"/></svg>
          </div>
        </div>
        <div class="toolbar">
          <div class="tools">
            ${TOOLS.map(([x, w, c]) => svg`<svg width=${w} height="26" viewBox="${x} 28 ${w} 26" aria-hidden="true">${c}</svg>`)}
          </div>
          <div class="sel s1"><span>10000 units</span><i>${ddArrow}</i></div>
          <div class="sel s2"><span>Daily</span><i>${ddArrow}</i></div>
          <div class="ind">
            <svg width="34" height="25" viewBox="0 0 34 25" aria-hidden="true">
              <path d="M2 17l6-9 6 12 6-14 5 10 6-12" fill="none" stroke="#d33" stroke-width="1"/>
              <path d="M2 13l7 7 6-12 6 12 9-15" fill="none" stroke="#2a2" stroke-width="1"/>
              <path d="M2 23h3v-2h3v1h4v-3h3v3h3v-1h4v-2h3v2h5v2H2z" fill="#11aa22"/>
              <path d="M4 2h4v3h3v4H8v3H4V9H1V5h3z" fill="#fff" stroke="#777"/>
              <path d="M12 19v-4h-2l3-4 3 4h-2v4z" fill="#11aa22"/><path d="M24 2v4h-2l3 4 3-4h-2V2z" fill="#dd1111"/>
            </svg>
            <div>${ddArrow}</div>
          </div>
        </div>
        <div class="charts">
          <div class="row">
            ${this.plot("p1", 58, 404, this.priceSvg(), html`<div class="tab"><span>Price</span>${wrench}${win}${closeIc}${fadeIc(false)}${fadeIc(true)}</div>`)}
            ${this.axis(58, 408, this.priceAxis())}
          </div>
          <div class="row gap3">
            ${this.plot("p2", 466, 54, this.volSvg(), html`<div class="tab"><span>Volume</span>${wrench}${win}${closeIc}</div>`)}
            ${this.axis(466, 57, svg`${tick(497)}<text x="1313" y="493" font-size="11" fill="#111">500,000</text>${box("356,983", 497, "#4fce4f", 42)}${box("-61.465", 512, "#111", 40)}`)}
          </div>
          <div class="row gap3">
            ${this.plot("p3", 523, 70, this.macdSvg(), html`<div class="tab"><span>MACD (12 26 9)</span>${wrench}${win}${closeIc}</div>`)}
            ${this.axis(523, 73, svg`${tick(531)}${tick(547)}${tick(565)}<text x="1313" y="535" font-size="11.5" fill="#111">100</text><text x="1311" y="569" font-size="11.5" fill="#111">-100</text>${box("17.809", 547, "#4fce4f", 35)}${box("-168.13", 572, "#4444ee")}${box("-185.94", 586, "#e77f85")}<line x1="1306" x2="1311" y1="578" y2="578" stroke="#33c"/>`)}
          </div>
          <div class="row gap3">
            ${this.plot("p4", 596, 75, this.stochSvg(), html`<div class="tab"><span>Stochastic (14 3 5)</span>${wrench}${win}${closeIc}</div>`)}
            ${this.axis(596, 75, svg`${tick(603)}${tick(630)}${tick(643)}${tick(669)}<text x="1313" y="608" font-size="12.5" font-weight="700" fill="#111">100</text><text x="1313" y="668" font-size="11.5" fill="#111">0</text>${box("56.993", 628, "#111", 35)}${box("38.535", 643, "#e77f85", 35)}`)}
          </div>
          <svg class="dates" width="1356" height="22" viewBox="4 671 1356 22" aria-label="dates">
            <rect x="4" y="692" width="1356" height="1" fill="#8ea8b4"/>
            ${DATES.map(([l, x, b]) => svg`
              <line x1=${x} x2=${x} y1="671" y2="676" stroke="#8096a4"/>
              <text x=${x} y="688" text-anchor="middle" font-size="11" font-weight=${b ? 700 : 400} fill="#111">${l}</text>`)}
          </svg>
          <svg class="ink" width="1366" height="635" viewBox="0 58 1366 635" aria-hidden="true" fill="none" stroke="#000" stroke-linejoin="round" stroke-linecap="round">
            <polyline stroke-width="3.8" points=${line(zr("1018,245 1010,300 1007,380 1007,455 1030,510 1050,545 1080,590 1110,625 1150,650 1225,687 1315,687 1345,655 1370,590 1390,515 1412,420 1415,215", 200))}/>
            <polygon stroke-width="4.5" points=${line(zr("1255,195 1270,262 1305,262 1272,310 1285,370 1255,335 1225,370 1237,310 1207,262 1240,262", 200))}/>
            <polyline stroke-width="4.5" points=${line(zr("1175,20 1285,117", 460))}/>
            <polyline stroke-width="3" points=${line(zr("1008,313 1020,335 1060,352 1095,365 1130,400 1170,422 1240,427 1290,400 1335,360", 460))}/>
            <polyline stroke-width="3" points=${line(zr("887,128 900,130 940,175 985,212 1045,230 1120,247 1170,237 1215,237 1260,205 1300,175 1320,140 1335,108", 600))}/>
          </svg>
        </div>
        <div class="scroll">
          <svg width="62" height="24" viewBox="0 0 62 24" aria-hidden="true">
            <rect x="11" y="6" width="13" height="14" fill="#fff" stroke="#2a5fc0" stroke-width="1.5"/><rect x="11" y="6" width="13" height="3" fill="#2a5fc0"/>
            <path d="M13 18l3-6 3 3 3-5" stroke="#d33" fill="none"/><path d="M17 8c2-4 5-5 8-4l1-2 3 5-5 2 1-2c-3-1-5 0-8 1z" fill="#33bb44" stroke="#198a28" stroke-width=".6"/>
            <path d="M21 20h6l-3 3z" fill="#111"/>
            <path d="M37 5c0-3 5-3 5 0v6c0 3-5 3-5 0zM37 13c0-3 5-3 5 0v6c0 3-5 3-5 0z" fill="#fff" stroke="#111" stroke-width="1.2"/>
            <path d="M47 8v12M54 3v14" stroke="#222"/><rect x="44.5" y="10.5" width="5" height="6" fill="#ee6a6a" stroke="#222"/><rect x="51.5" y="5.5" width="5" height="9" fill="#3fd24a" stroke="#222"/>
            <path d="M48 20h6l-3 3z" fill="#111"/>
          </svg>
          <div class="sbtn"><svg width="5" height="8" viewBox="0 0 5 8" aria-hidden="true"><path d="M5 0v8L0 4z" fill="#111"/></svg></div>
          <div class="track"><div class="thumb"><u></u><u></u><u></u></div></div>
          <div class="sbtn"><svg width="5" height="8" viewBox="0 0 5 8" aria-hidden="true"><path d="M0 0v8l5-4z" fill="#111"/></svg></div>
          <svg width="114" height="26" viewBox="1250 698 114 26" aria-hidden="true" fill="none">
            <path d="M1264 701v20" stroke="#222"/><rect x="1261" y="703" width="7" height="15" fill="#3fd24a" stroke="#222"/><rect x="1256.5" y="712" width="6" height="8" fill="#ee6a6a" stroke="#222"/>
            <path d="M1258 718l8-11" stroke="#fff" stroke-width="3"/><path d="M1264 704c2-2 5-2 7-1l-2 3 1 2 3-1c0 3-3 4-5 4z" fill="#eee" stroke="#444" stroke-width=".7"/>
            <path d="M1295 714l6 6" stroke="#111" stroke-width="3"/><circle cx="1291" cy="709" r="6.5" fill="#cfd6d9" stroke="#555" stroke-width="1.4"/>
            <path d="M1284 720h8M1284 720l2-2M1284 720l2 2M1292 720l-2-2M1292 720l-2 2M1299 702v11M1299 702l-2 2M1299 702l2 2M1299 713l-2-2M1299 713l2-2" stroke="#0a18e0"/>
            <path d="M1322 715l7 6" stroke="#111" stroke-width="3"/><circle cx="1318" cy="710" r="6" fill="#fff" stroke="#333" stroke-width="1.4"/><path d="M1315 710h6" stroke="#0a18e0" stroke-width="1.8"/>
            <path d="M1350 715l7 6" stroke="#111" stroke-width="3"/><circle cx="1346" cy="710" r="6" fill="#fff" stroke="#333" stroke-width="1.4"/><path d="M1343 710h6M1346 707v6" stroke="#0a18e0" stroke-width="1.8"/>
          </svg>
        </div>
      </div>
      <div class="taskbar">
        <svg class="orb" width="40" height="40" viewBox="0 0 40 40" aria-hidden="true">
          <defs><radialGradient id="ob" cx=".5" cy=".75" r=".7"><stop offset="0" stop-color="#7fd4f0"/><stop offset=".6" stop-color="#2a7fb8"/><stop offset="1" stop-color="#0d3f6d"/></radialGradient></defs>
          <circle cx="20" cy="20" r="18.5" fill="url(#ob)" stroke="#0d2d44"/>
          <path d="M11 13q4-2 8 0l-1.5 6q-4-2-8 0z" fill="#e8502a"/><path d="M20 13.5q4 2 8 0l-1.5 6q-4 2-8 0z" fill="#8cc63f"/>
          <path d="M9 20q4-2 8 0l-1.5 6q-4-2-8 0z" fill="#3f9fe0"/><path d="M18 20.5q4 2 8 0l-1.5 6q-4 2-8 0z" fill="#f6c32c"/>
          <ellipse cx="20" cy="9" rx="13" ry="6.5" fill="#fff" opacity=".28"/>
        </svg>
        <div class="grip g1"></div>
        <div class="tb wmp"><svg width="28" height="28" viewBox="0 0 28 28" aria-hidden="true"><rect x="5" y="3" width="19" height="23" rx="2" fill="#8fc3e5" stroke="#5a8db0"/><rect x="2" y="2" width="18" height="24" rx="3" fill="#f18a1f" stroke="#fff" stroke-width="1.2"/><circle cx="11" cy="14" r="7" fill="#fff"/><path d="M9 10l6 4-6 4z" fill="#f18a1f"/></svg></div>
        <div class="tb on"><svg width="30" height="30" viewBox="0 0 30 30" aria-hidden="true"><circle cx="15" cy="15" r="14" fill="#dd3a2c"/><path d="M15 15L27 8a14 14 0 0 1-9 20.7z" fill="#f5c518"/><path d="M15 15l3 13.7A14 14 0 0 1 3 8z" fill="#3ca445"/><circle cx="15" cy="15" r="6.5" fill="#3f86d9" stroke="#fff" stroke-width="2"/></svg></div>
        <div class="tb" ><svg width="32" height="30" viewBox="0 0 32 30" aria-hidden="true"><path d="M1 5h10l2 2h18v21H1z" fill="#f4d88a" stroke="#b49a50"/><rect x="4" y="3" width="9" height="5" fill="#fff" stroke="#bbb"/><rect x="5" y="4" width="3" height="2" fill="#1ca03c"/><rect x="9" y="4" width="3" height="2" fill="#dd3a2c"/><rect x="17" y="4" width="10" height="4" fill="#fff" stroke="#bbb"/><path d="M1 10h30v18H1z" fill="#fbe9b4" stroke="#c9ab5e"/><path d="M8 18h16l3 9H22v-4H10v4H5z" fill="#9ed4ee" stroke="#4b94bb"/></svg></div>
        <div class="tb"><svg width="32" height="32" viewBox="0 0 32 32" aria-hidden="true"><circle cx="16" cy="16" r="15" fill="#2a5fa8"/><path d="M16 1a15 15 0 0 1 13 22c-3 7-10 9-15 8-7-1-12-7-12-13 0-3 1-6 3-8 0 2 1 3 2 4 1-3 4-6 9-6-1 2-1 3 0 4 2 1 5 1 5 4s-3 4-6 4c2 2 8 1 10-3 2-5-3-11-9-13z" fill="#ef7a1a"/><path d="M3 18c1 7 7 13 13 13s10-3 13-8c-3 3-8 4-12 3-6-1-11-4-14-8z" fill="#e23c1c"/></svg></div>
        <div class="tb on" ><svg width="30" height="34" viewBox="0 0 30 34" aria-hidden="true"><path d="M15 1l13 4c1 12-3 23-13 28C5 28 1 17 2 5z" fill="#d8d8d8" stroke="#777"/><path d="M15 4l10 3c.5 10-2 18-10 23C7 25 4.5 17 5 7z" fill="#8f1b24"/><text x="15" y="20" text-anchor="middle" font-size="15" font-weight="700" fill="#fff">M</text></svg></div>
        <div class="tb on" ><svg width="32" height="31" viewBox="0 0 32 31" aria-hidden="true"><rect width="32" height="31" fill="#fff"/><circle cx="16" cy="15.5" r="11.5" fill="none" stroke="#1a6fb8" stroke-width="6"/><path d="M16 8a7.5 7.5 0 0 1 7.5 7.5" fill="none" stroke="#d4ebf8" stroke-width="2"/></svg></div>
        <div class="tb on act"><svg width="30" height="34" viewBox="0 0 30 34" aria-hidden="true"><path d="M8 13v20M21 1v28" stroke="#222"/><rect x="3.5" y="17.5" width="10" height="12" fill="#ee6a6a" stroke="#222"/><rect x="16.5" y="8.5" width="10" height="18" fill="#3fd24a" stroke="#222"/></svg></div>
        <div class="strip"></div>
        <div class="spacer"></div>
        <div class="grip"></div>
        <div class="lang">PT</div>
        <div class="tray">
          <svg width="110" height="24" viewBox="0 0 110 24" aria-hidden="true">
            <path d="M0 14l4-4 4 4z" fill="#eef2f5"/>
            <path d="M19 6h9v16H19z" fill="#e8ecef" stroke="#222"/><path d="M23 2v6M27 2v6" stroke="#eee" stroke-width="2"/><path d="M18 15l7 7M25 15l-7 7" stroke="#dd1111" stroke-width="2"/>
            <path d="M45 3v18" stroke="#f2f5f7" stroke-width="1.8"/><path d="M46 4h12l-3 4 3 4H46z" fill="#eef2f5"/>
            <path d="M68 9h3l5-5v16l-5-5h-3z" fill="#dfe6ea" stroke="#455"/><path d="M79 8c2 2 2 6 0 8M82 6c3 3 3 9 0 12" stroke="#dfe6ea" fill="none"/>
            <path d="M93 7l5-4 4 3 4-3 5 4-4 3 4 4-5 3-4-3-4 3-5-3 4-4z" fill="#69a8dc" stroke="#e8f2fa" stroke-width=".6"/><circle cx="106" cy="18" r="5" fill="#37a537" stroke="#e8f2fa"/><path d="M103.5 18l2 2 3-4" stroke="#fff" fill="none" stroke-width="1.3"/>
          </svg>
        </div>
        <div class="clock">21:03<br />23-10-2014</div>
        <div class="desk"></div>
      </div>
    </div>`;
  }
}
